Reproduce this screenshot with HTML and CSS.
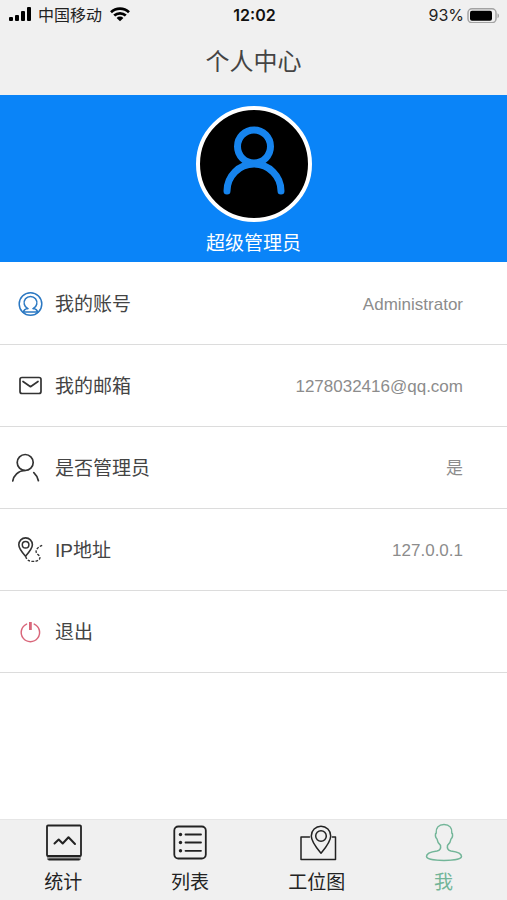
FILE: index.html
```html
<!DOCTYPE html>
<html lang="zh-CN">
<head>
  <meta charset="utf-8">
  <meta name="viewport" content="width=device-width, initial-scale=1">
  <title>个人中心</title>
  <link rel="stylesheet" href="styles.css">
</head>
<body>
  <header class="top">
    <div class="status">
      <div class="status-left">
        <svg width="24" height="16" viewBox="0 0 24 16" aria-hidden="true">
          <rect x="0" y="10" width="4" height="4" rx="1"/>
          <rect x="6" y="8" width="4" height="6" rx="1"/>
          <rect x="12" y="4" width="4" height="10" rx="1"/>
          <rect x="18" y="0" width="4" height="14" rx="1"/>
        </svg>
        <span>中国移动</span>
        <svg class="wifi" width="20" height="16" viewBox="0 0 20 16" aria-hidden="true">
          <path d="M1 5.200a13 13 0 0 1 18 0M4.200 8.600a8.400 8.400 0 0 1 11.600 0" fill="none" stroke="#000" stroke-width="2.700"/>
          <path d="M10 14.200L6.600 10.900a4.800 4.800 0 0 1 6.800 0z"/>
        </svg>
      </div>
      <time class="clock">12:02</time>
      <div class="status-right">
        <span>93%</span>
        <svg width="33" height="16" viewBox="0 0 33 16" aria-hidden="true">
          <rect x="1" y="1.750" width="28" height="14" rx="4" fill="none" stroke="#a3a3a3" stroke-width="1.500"/>
          <rect x="3" y="3.750" width="22" height="10" rx="2"/>
          <path d="M30.500 6.200c2 .8 2 4.200 0 5z" fill="#a3a3a3"/>
        </svg>
      </div>
    </div>
    <h1 class="title">个人中心</h1>
  </header>

  <main class="main">
    <section class="hero">
      <svg class="avatar" viewBox="0 0 108 108" role="img" aria-label="头像">
        <g fill="none" stroke="#1684ee" stroke-width="7" stroke-linecap="round">
          <circle cx="54" cy="36.500" r="16.500"/>
          <path d="M27 81a27 27 0 0 1 54 0"/>
        </g>
      </svg>
      <p class="name">超级管理员</p>
    </section>

    <ul class="list">
      <li class="row">
        <svg class="icon blue" viewBox="0 1 36 36" aria-hidden="true">
          <circle cx="18.500" cy="18" r="11.300"/>
          <path d="M15.800 22.600a6.400 6.400 0 1 1 5.400 0"/>
          <path d="M11.200 26.400c.7-2.300 2.300-3.600 4.600-3.800M25.800 26.400c-.7-2.300-2.300-3.600-4.600-3.800M12.300 25.900h12.400"/>
        </svg>
        <span class="label">我的账号</span>
        <span class="value">Administrator</span>
      </li>
      <li class="row">
        <svg class="icon" viewBox="0 1 36 36" aria-hidden="true">
          <rect x="8" y="9.500" width="21" height="16" rx="2" stroke-width="1.700"/>
          <path d="M11 13.500l7.500 5.200 7.500-5.200" stroke-width="1.700"/>
        </svg>
        <span class="label">我的邮箱</span>
        <span class="value">1278032416@qq.com</span>
      </li>
      <li class="row">
        <svg class="icon" viewBox="0 1 36 36" aria-hidden="true">
          <circle cx="13.200" cy="12.500" r="8" stroke-width="1.700"/>
          <path d="M0.800 31c.8-5.500 5.200-10.300 12.200-10.500M21.800 22.600c2.300 2.100 3.800 4.700 4.600 8.100" stroke-width="1.700"/>
        </svg>
        <span class="label">是否管理员</span>
        <span class="value">是</span>
      </li>
      <li class="row">
        <svg class="icon" viewBox="0 1 36 36" aria-hidden="true">
          <path d="M13.500 24.200C9.500 19.700 6.800 15.900 6.800 12.700a6.800 6.800 0 0 1 13.600 0c0 3.200-2.900 7-6.900 11.500z" stroke-width="1.600"/>
          <circle cx="13.600" cy="12.800" r="3.300" stroke-width="1.500"/>
          <path class="dashed" d="M13.700 24.500c.8 3 3 4.900 7 4.900 4.500 0 7.300-1.300 7.200-3.800-.2-2.800-4-3.500-3.800-6.300.2-2.700 3.300-5 6.600-6.200"/>
        </svg>
        <span class="label">IP地址</span>
        <span class="value">127.0.0.1</span>
      </li>
      <li>
        <button class="row" type="button">
          <svg class="icon red" viewBox="0 1 36 36" aria-hidden="true">
            <path d="M14.600 10.100a9.200 9.200 0 1 0 7.600 0"/>
            <path d="M18.400 8v8" stroke-width="2.800" stroke-linecap="butt"/>
          </svg>
          <span class="label">退出</span>
        </button>
      </li>
    </ul>
  </main>

  <nav class="tabs">
    <a class="tab" href="#stats">
      <svg viewBox="0 0 40 40" aria-hidden="true">
        <path d="M4 33h34v4H4z" fill="#999" stroke="none"/>
        <rect x="4" y="2.500" width="34" height="30.500" rx="1" stroke-width="1.800"/>
        <path d="M6 36.500h30" stroke-width="1.800"/>
        <path d="M11.500 20.500l4.200-4 4 4 5.800-6.300 6.500 6.800" stroke-width="2"/>
      </svg>
      <span>统计</span>
    </a>
    <a class="tab" href="#list">
      <svg viewBox="0 0 40 40" aria-hidden="true">
        <rect x="4.300" y="3.500" width="31.500" height="32" rx="4" stroke-width="1.800"/>
        <path d="M15.500 11.500h15.500M15.500 19.500h15.500M15.500 27.800h15.500" stroke-width="1.800"/>
        <g fill="#222" stroke="none"><circle cx="10.500" cy="11.500" r="1.700"/><circle cx="10.500" cy="19.500" r="1.700"/><circle cx="10.500" cy="27.800" r="1.700"/></g>
      </svg>
      <span>列表</span>
    </a>
    <a class="tab" href="#map">
      <svg viewBox="0 0 40 40" aria-hidden="true">
        <path d="M12.500 14H4v22.500h34.500V14h-3.200"/>
        <path d="M24 30.200c-4.700-5.800-9.700-11.600-9.700-17.300a9.700 9.700 0 0 1 19.400 0c0 5.700-5 11.500-9.700 17.300z"/>
        <circle cx="24" cy="13" r="5.300"/>
      </svg>
      <span>工位图</span>
    </a>
    <a class="tab active" href="#me" aria-current="page">
      <svg viewBox="0 0 40 40" aria-hidden="true">
        <path d="M20 1.500c-5.500 0-8.300 3.500-7.800 8.500-1.300.8-1 4.700.8 6 .4 3 1.700 4.900 3.500 6.300.6 3.200-.6 5-3.500 5.600-6.200.8-10.500 2.500-10.500 5.600 0 5.200 35 5.200 35 0 0-3.100-4.300-4.800-10.500-5.600-2.900-.6-4.100-2.400-3.500-5.600 1.800-1.400 3.100-3.300 3.500-6.300 1.800-1.300 2.100-5.200.8-6 .5-5-2.300-8.500-7.800-8.500z"/>
      </svg>
      <span>我</span>
    </a>
  </nav>
</body>
</html>
```

FILE: styles.css
```css
* {
  box-sizing: border-box;
}

body {
  display: flex;
  flex-direction: column;
  min-height: 100vh;
  margin: 0;
  background: #fff;
  color: #444;
  font-family: "Liberation Sans", "Noto Sans CJK SC", sans-serif;
  font-size: 19px;
  line-height: 28px;
}

.top {
  background: #f0f0f0;
}

.status {
  display: grid;
  grid-template-columns: 1fr auto 1fr;
  align-items: center;
  height: 29px;
  padding: 0 7px 0 9px;
  color: #222;
  font-family: Inter, "Noto Sans CJK SC", sans-serif;
  font-size: 16px;
}

.status-left,
.status-right {
  display: flex;
  align-items: center;
}

.status-left {
  gap: 5px;
}

.wifi {
  margin-left: 3px;
}

.status-right {
  justify-content: flex-end;
  gap: 3px;
}

.clock {
  color: #111;
  font-weight: 600;
}

.title {
  margin: 0;
  padding: 15px 0;
  font-size: 24px;
  font-weight: 400;
  line-height: 36px;
  text-align: center;
}

.main {
  flex: 1;
}

.hero {
  display: flex;
  flex-direction: column;
  align-items: center;
  gap: 10px;
  padding: 11px 0 6px;
  background: #0a84f8;
  color: #fff;
}

.avatar {
  width: 116px;
  height: 116px;
  border: 4px solid #fff;
  border-radius: 50%;
  background: #000;
}

.name {
  margin: 0;
  line-height: 24px;
}

.list {
  margin: 0;
  padding: 1px 0 0;
  list-style: none;
}

.row {
  display: flex;
  align-items: center;
  gap: 7px;
  width: 100%;
  height: 82px;
  padding: 2px 44px 0 12px;
  border: 0;
  border-bottom: 1px solid #dcdcdc;
  background: none;
  color: inherit;
  font: inherit;
  text-align: left;
}

.icon {
  width: 36px;
  height: 36px;
  fill: none;
  stroke: #333;
  stroke-width: 1.5;
  stroke-linecap: round;
  stroke-linejoin: round;
}

.blue {
  stroke: #2b78c2;
}

.red {
  stroke: #d9667a;
}

.dashed {
  stroke-width: 1.4;
  stroke-linecap: butt;
  stroke-dasharray: 2.6 1.4;
}

.value {
  margin-left: auto;
  color: #8c8c8c;
  font-size: 17px;
}

.tabs {
  display: grid;
  grid-template-columns: repeat(4, 1fr);
  border-top: 1px solid #e6e6e6;
  background: #f0f0f0;
}

.tab {
  display: flex;
  flex-direction: column;
  align-items: center;
  gap: 6px;
  padding: 3px 0;
  color: #222;
  text-decoration: none;
}

.tab svg {
  width: 40px;
  height: 40px;
  fill: none;
  stroke: currentColor;
  stroke-width: 1.5;
  stroke-linecap: round;
  stroke-linejoin: round;
}

.tab.active {
  color: #72b598;
}
```
